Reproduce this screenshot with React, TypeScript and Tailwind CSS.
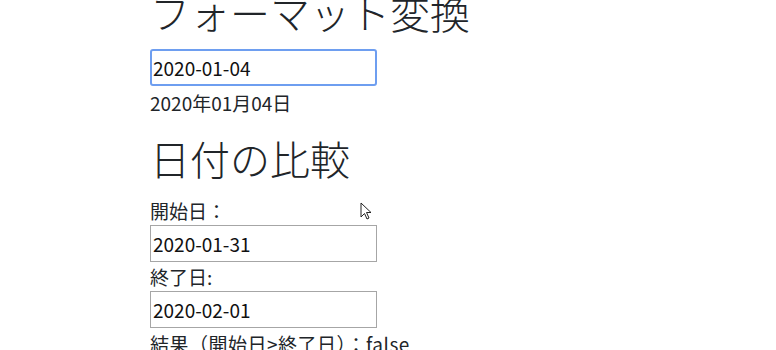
import React from "react"

const font = { fontFamily: '"Noto Sans CJK JP", "Noto Sans", sans-serif' }

function Field({ value, focused }: { value: string; focused?: boolean }) {
  return (
    <input
      readOnly
      value={value}
      className={
        focused
          ? "block w-[227px] h-[37px] px-[1px] text-[19px] text-[#111] bg-white border-2 border-[#6e9ef0] rounded-[3px] outline-none"
          : "block w-[227px] h-[37px] px-[2px] text-[19px] text-[#111] bg-white border border-[#a6a6a6] outline-none"
      }
      style={font}
    />
  )
}

export default function App() {
  return (
    <div className="relative w-[776px] h-[350px] overflow-hidden bg-white text-[#212529]" style={font}>
      <div className="pl-[150px] -mt-[12px]">
        <h1 className="text-[40px] leading-[48px] font-light mb-[13px]">フォーマット変換</h1>
        <Field value="2020-01-04" focused />
        <div className="text-[19px] leading-[24px] mt-[5px]">2020年01月04日</div>
        <h2 className="text-[40px] leading-[48px] font-light mt-[19px] mb-[17px]">日付の比較</h2>
        <div className="text-[19px] leading-[24px]">開始日：</div>
        <div className="mt-[2px]">
          <Field value="2020-01-31" />
        </div>
        <div className="text-[19px] leading-[24px] mt-[3px]">終了日:</div>
        <div className="mt-[2px]">
          <Field value="2020-02-01" />
        </div>
        <div className="text-[19px] leading-[24px] mt-[4px] whitespace-nowrap tracking-[0.5px]">結果（開始日&gt;終了日）：false</div>
      </div>
      <svg className="absolute left-[360px] top-[202px]" width="13" height="19" viewBox="0 0 13 19">
        <path d="M1 1 L1 15 L4.5 11.5 L7 17 L9 16 L6.5 10.5 L11 10.5 Z" fill="white" stroke="#222" strokeWidth="1" />
      </svg>
    </div>
  )
}
